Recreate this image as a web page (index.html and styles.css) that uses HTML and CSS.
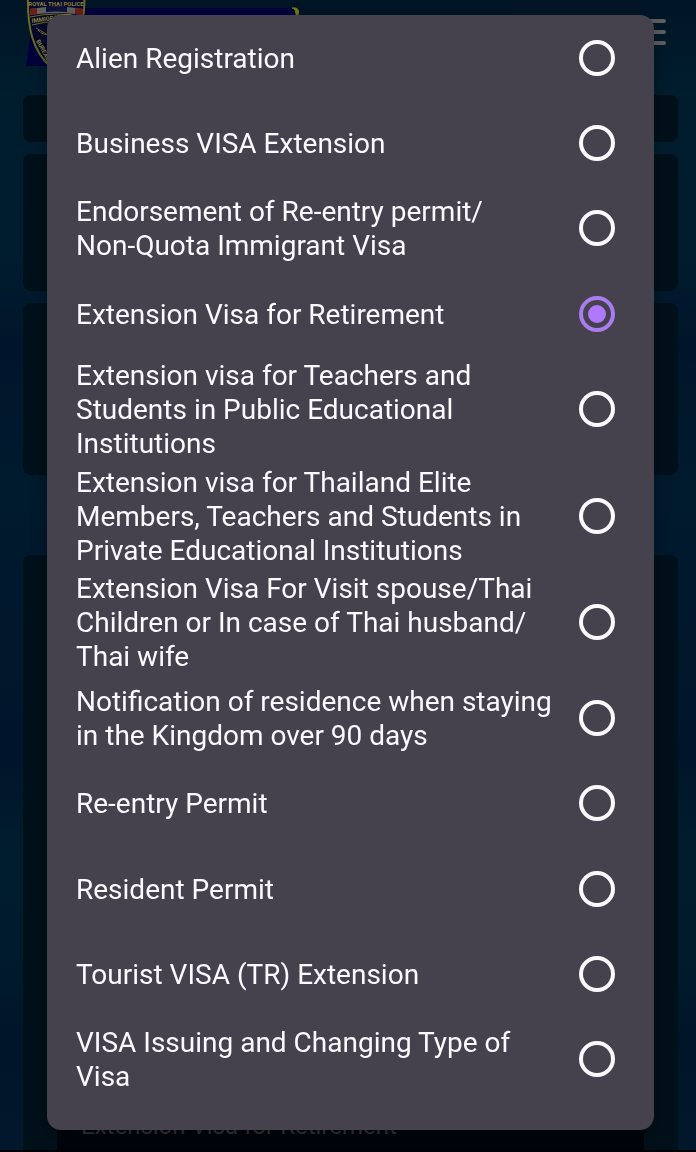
FILE: index.html
```html
<!DOCTYPE html>
<html lang="en">
<head>
<meta charset="utf-8">
<meta name="viewport" content="width=device-width, initial-scale=1">
<title>Immigration Services</title>
<link rel="stylesheet" href="styles.css">
</head>
<body>
<div class="page" inert>
  <header class="header">
    <svg class="logo" viewBox="0 0 300 72" aria-hidden="true">
      <path d="M34 8H270V34H84V66H0L8 8Z" fill="#00003c"/>
      <path d="M266 8q5 0 4 12q5-10 0-12z" fill="#777d12" stroke="#777d12" stroke-width="1"/>
      <path d="M2-5C1 28 7 52 25 67C46 53 61 26 58-5Z" fill="#050a2c" stroke="#6d6a24" stroke-width="2"/>
      <path d="M4 9Q31 4 57 9V15Q31 11 4 15Z" fill="#62625f"/>
      <path d="M4 9l7-1v6l-7 1zM49 8l8 1v6l-8-1z" fill="#701c18"/>
      <path d="M20 7Q31 6 41 7V12Q31 11 20 12Z" fill="#10123e"/>
      <path d="M4 17Q31 11 57 17M6 25Q31 18 55 25M10 28l34 20M12 30q5 6 12 4" fill="none" stroke="#6d6a24" stroke-width="1"/>
      <text x="30" y="6" class="logo-text">ROYAL THAI POLICE</text>
      <text x="6" y="23" class="logo-text logo-side" transform="rotate(-8 6 23)">IMMIGRATION</text>
      <text x="10" y="41" class="logo-text logo-side" transform="rotate(62 10 41)">BUREAU</text>
    </svg>
    <button class="menu" aria-label="Menu"><span></span><span></span><span></span></button>
  </header>
  <main class="cards">
    <section class="card card-small"></section>
    <section class="card card-medium"></section>
    <section class="card card-large"></section>
    <section class="card card-form">
      <button class="field">Extension Visa for Retirement</button>
    </section>
  </main>
</div>
<div class="overlay">
  <form class="dialog" role="dialog" aria-label="Service">
    <label class="option"><span class="option-name">Alien Registration</span><input type="radio" name="service"></label>
    <label class="option"><span class="option-name">Business VISA Extension</span><input type="radio" name="service"></label>
    <label class="option"><span class="option-name">Endorsement of Re-entry permit/<wbr><span class="keep">Non-Quota</span> Immigrant Visa</span><input type="radio" name="service"></label>
    <label class="option"><span class="option-name">Extension Visa for Retirement</span><input type="radio" name="service" checked></label>
    <label class="option"><span class="option-name">Extension visa for Teachers and Students in Public Educational Institutions</span><input type="radio" name="service"></label>
    <label class="option"><span class="option-name">Extension visa for Thailand Elite Members, Teachers and Students in Private Educational Institutions</span><input type="radio" name="service"></label>
    <label class="option"><span class="option-name">Extension Visa For Visit spouse/Thai Children or In case of Thai husband/<wbr>Thai wife</span><input type="radio" name="service"></label>
    <label class="option"><span class="option-name">Notification of residence when staying in the Kingdom over 90 days</span><input type="radio" name="service"></label>
    <label class="option"><span class="option-name">Re-entry Permit</span><input type="radio" name="service"></label>
    <label class="option"><span class="option-name">Resident Permit</span><input type="radio" name="service"></label>
    <label class="option"><span class="option-name">Tourist VISA (TR) Extension</span><input type="radio" name="service"></label>
    <label class="option"><span class="option-name">VISA Issuing and Changing Type of Visa</span><input type="radio" name="service"></label>
  </form>
</div>
</body>
</html>
```
FILE: styles.css
```css
* {
  box-sizing: border-box;
}

body {
  margin: 0;
  background: #001426;
  font-family: Roboto, "Liberation Sans", sans-serif;
}

.page {
  position: fixed;
  inset: 0;
  display: flex;
  flex-direction: column;
  overflow: hidden;
  background: linear-gradient(#001525 0, #001d2e 8%, #001c2f 22%, #00152b 30%, #001a2e 42%, #00152b 66%, #001d2d 74%, #001c2c 82%, #00152a 90%, #00172c);
  border-bottom: 2px solid #000205;
}

.header {
  display: flex;
  flex: none;
  justify-content: space-between;
  align-items: flex-start;
  height: 95px;
  padding: 0 30px 0 26px;
}

.logo {
  width: 300px;
  height: 72px;
}

.logo-text {
  fill: #88833c;
  font-size: 6px;
  font-weight: 700;
  text-anchor: middle;
}

.logo-side {
  text-anchor: start;
}

.menu {
  display: grid;
  gap: 7px;
  width: 32px;
  margin: 19px 0 0;
  padding: 0;
  border: 0;
  background: none;
}

.menu span {
  height: 4px;
  border-radius: 2px;
  background: #5c6064;
}

.cards {
  display: flex;
  flex: 1;
  flex-direction: column;
  gap: 12px;
  padding: 0 18px 0 23px;
}

.card {
  border-radius: 8px;
  background: #001019;
}

.card-small {
  height: 47px;
}

.card-medium {
  height: 137px;
}

.card-large {
  height: 172px;
}

.card-form {
  display: flex;
  flex: 1;
  flex-direction: column;
  justify-content: flex-end;
  margin-top: 68px;
  padding: 0 34px;
  border-radius: 8px 8px 0 0;
}

.field {
  height: 48px;
  padding: 0 24px;
  border: 0;
  background: #00050b;
  color: #303238;
  font-family: inherit;
  font-size: 24px;
  text-align: left;
}

.overlay {
  position: relative;
  display: flex;
  min-height: 100vh;
  padding: 15px 42px 22px 47px;
}

.dialog {
  display: grid;
  flex: 1;
  padding: 0 39px 28px 29px;
  border-radius: 14px;
  background: #45424d;
  box-shadow: 0 4px 16px rgba(0, 0, 0, 0.3);
}

.option {
  display: flex;
  align-items: center;
  justify-content: space-between;
  gap: 16px;
  min-height: 85px;
  padding: 1px 0;
  color: #fcfaff;
  font-size: 28px;
  line-height: 34px;
}

.option-name {
  padding-top: 2px;
}

.keep {
  white-space: nowrap;
}

.option input {
  appearance: none;
  display: grid;
  flex: none;
  place-items: center;
  width: 36px;
  height: 36px;
  margin: 0;
  border: 4px solid #fcfaff;
  border-radius: 50%;
}

.option input:checked {
  border-color: #a97df0;
}

.option input:checked::before {
  content: "";
  width: 18px;
  height: 18px;
  border-radius: 50%;
  background: #b078ff;
}
```
